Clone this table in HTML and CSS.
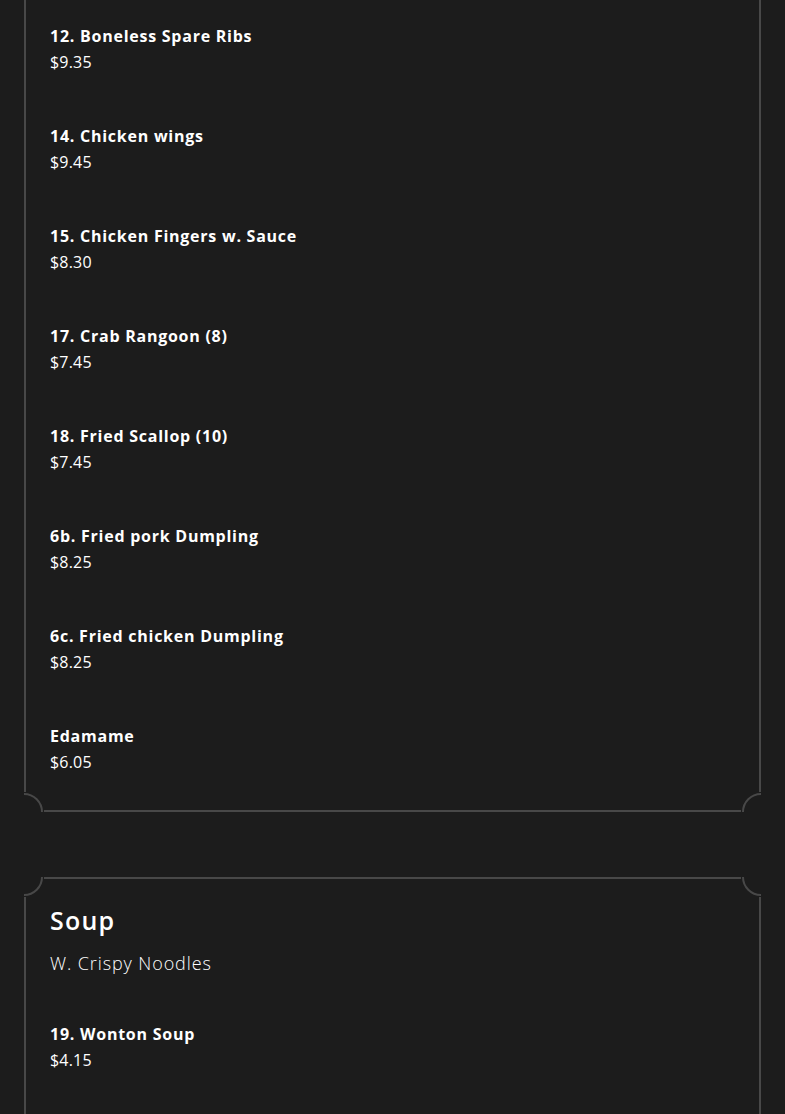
FILE: index.html
```html
<!DOCTYPE html>
<html lang="en">
<head>
<meta charset="utf-8">
<title>Menu</title>
<link rel="stylesheet" href="styles.css">
</head>
<body>
<main class="menu">
  <section class="card card-from-above">
    <span class="corner bl"></span>
    <span class="corner br"></span>
    <ul class="items">
      <li class="item"><div class="item-name">12. Boneless Spare Ribs</div><div class="item-price">$9.35</div></li>
      <li class="item"><div class="item-name">14. Chicken wings</div><div class="item-price">$9.45</div></li>
      <li class="item"><div class="item-name">15. Chicken Fingers w. Sauce</div><div class="item-price">$8.30</div></li>
      <li class="item"><div class="item-name">17. Crab Rangoon (8)</div><div class="item-price">$7.45</div></li>
      <li class="item"><div class="item-name">18. Fried Scallop (10)</div><div class="item-price">$7.45</div></li>
      <li class="item"><div class="item-name">6b. Fried pork Dumpling</div><div class="item-price">$8.25</div></li>
      <li class="item"><div class="item-name">6c. Fried chicken Dumpling</div><div class="item-price">$8.25</div></li>
      <li class="item"><div class="item-name">Edamame</div><div class="item-price">$6.05</div></li>
    </ul>
  </section>
  <section class="card card-to-below">
    <span class="corner tl"></span>
    <span class="corner tr"></span>
    <h2 class="card-title">Soup</h2>
    <p class="card-sub">W. Crispy Noodles</p>
    <ul class="items">
      <li class="item"><div class="item-name">19. Wonton Soup</div><div class="item-price">$4.15</div></li>
    </ul>
  </section>
</main>
</body>
</html>
```

FILE: styles.css
```css
html, body {
  margin: 0;
  padding: 0;
  background: #1c1c1c;
}
body {
  color: #ffffff;
  font-family: "Open Sans", "Liberation Sans", sans-serif;
}
.menu {
  display: flex;
  flex-direction: column;
  gap: 65px;
  padding: 0 24px;
}
.card {
  position: relative;
  border: 2px solid #484848;
  padding: 26px 24px 35px;
}
.card-from-above {
  border-top: none;
  padding-top: 23px;
}
.card-to-below {
  border-bottom: none;
  padding-bottom: 60px;
}
.corner {
  position: absolute;
  width: 20px;
  height: 20px;
  overflow: hidden;
  background: #1c1c1c;
}
.corner::after {
  content: "";
  position: absolute;
  width: 34px;
  height: 34px;
  border: 2px solid #484848;
  border-radius: 50%;
}
.corner.tl { top: -2px; left: -2px; }
.corner.tr { top: -2px; right: -2px; }
.corner.bl { bottom: -2px; left: -2px; }
.corner.br { bottom: -2px; right: -2px; }
.corner.tl::after { top: -19px; left: -19px; }
.corner.tr::after { top: -19px; right: -19px; }
.corner.bl::after { bottom: -19px; left: -19px; }
.corner.br::after { bottom: -19px; right: -19px; }
.items {
  list-style: none;
  margin: 0;
  padding: 0;
  display: flex;
  flex-direction: column;
  gap: 48px;
}
.item-name {
  font-size: 16px;
  line-height: 26px;
  font-weight: 700;
  letter-spacing: 0.75px;
}
.item-price {
  font-size: 16px;
  line-height: 26px;
  font-weight: 400;
  letter-spacing: 0.2px;
}
.card-title {
  margin: 0;
  font-size: 25px;
  line-height: 30px;
  font-weight: 600;
  letter-spacing: 1.2px;
}
.card-sub {
  margin: 15px 0 45px;
  font-size: 18px;
  line-height: 26px;
  font-weight: 300;
  letter-spacing: 0.9px;
}
```
